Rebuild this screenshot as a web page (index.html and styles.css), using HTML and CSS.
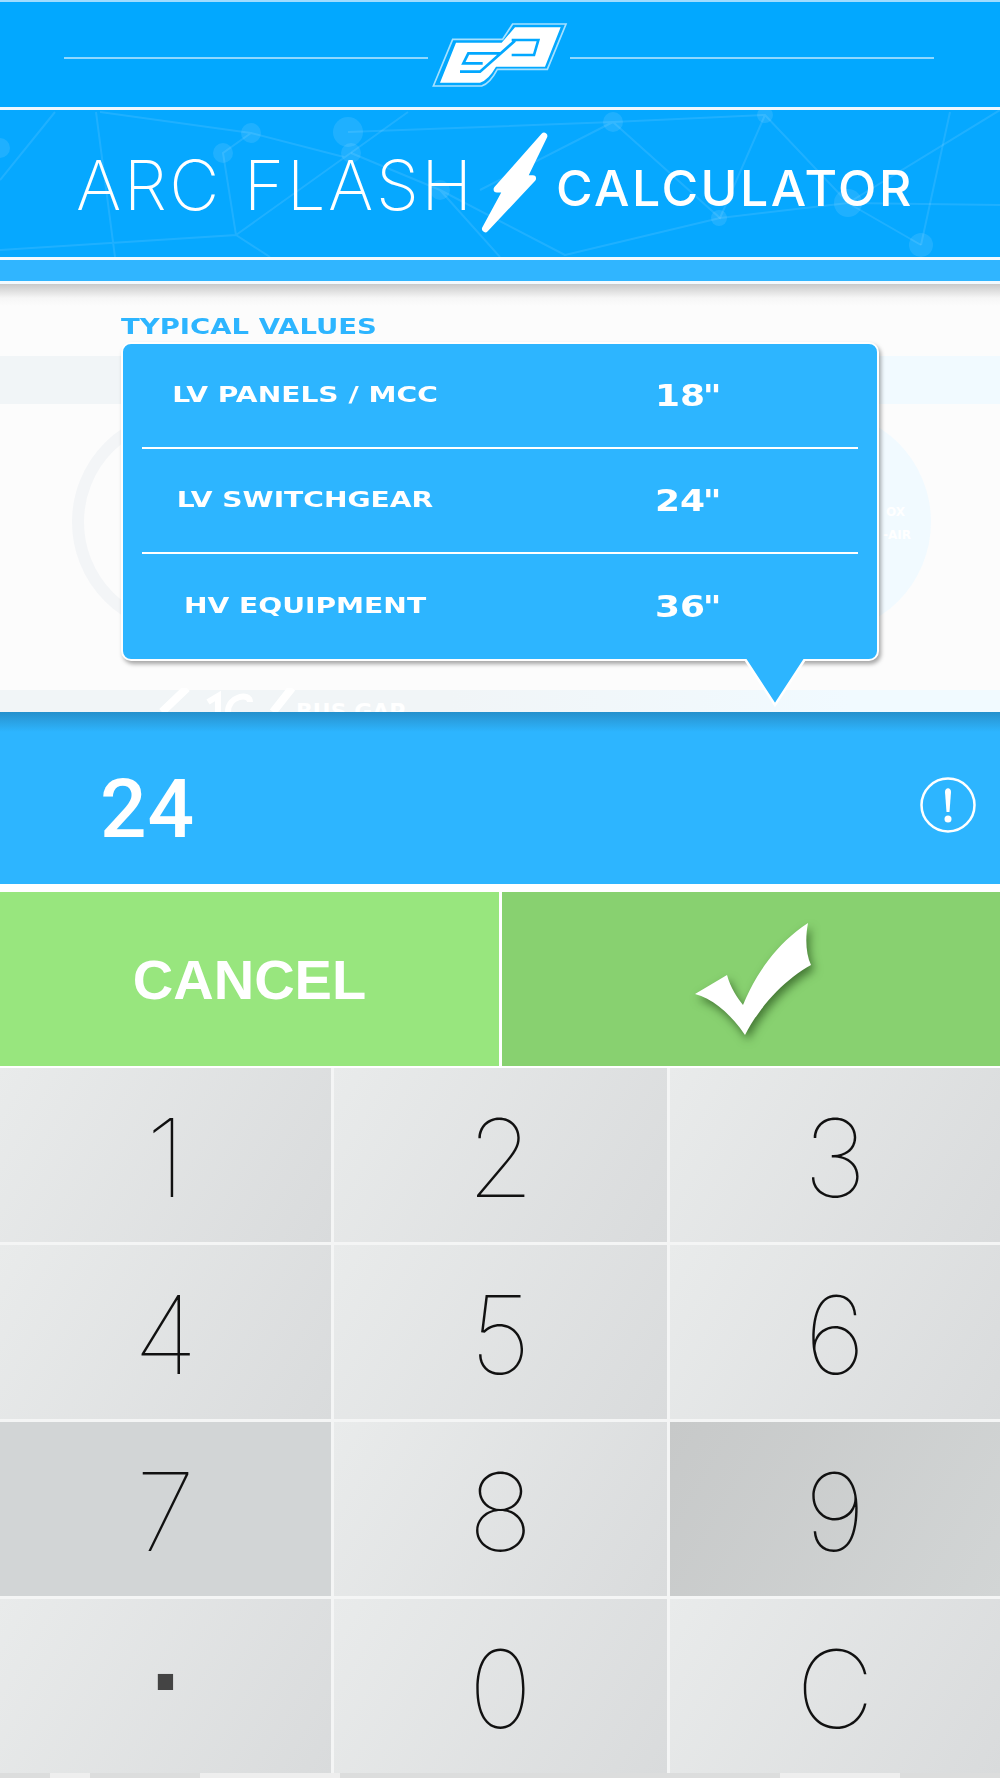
FILE: index.html
```html
<!DOCTYPE html>
<html lang="en">
  <head>
    <meta charset="UTF-8" />
    <meta name="viewport" content="width=device-width, initial-scale=1.0" />
    <title>Arc Flash Calculator</title>
    <link rel="stylesheet" href="styles.css">
  </head>
  <body>
    <!-- Logo bar -->
    <header class="logo-bar">
      <div class="logo-line"></div>
      <svg class="logo" viewBox="90 60 420 210" width="140" height="70">
        <path d="M100 258L158 118H308Q320 100 338 72H498L442 208H292Q270 250 245 258Z" fill="none" stroke="#a6e0ff" stroke-width="5" />
        <path d="M120 248L168 128H305L345 82H482L435 200H288Q265 240 240 248Z" fill="#fff" />
        <path d="M300 160H205L190 190H248M180 215H240L345 122M335 120H415L402 165H335" fill="none" stroke="#02a8ff" stroke-width="8" />
      </svg>
      <div class="logo-line"></div>
    </header>

    <!-- Title band -->
    <div class="title-band">
      <svg class="network" viewBox="0 110 1000 147" width="1000" height="147">
        <g stroke="#fff" stroke-opacity="0.1" stroke-width="2" fill="none">
          <path d="M96 112L115 257M55 112L0 180M100 112L251 133L344 157M251 133L223 153L236 235L0 250M236 235L270 257M236 235L408 112" />
          <path d="M348 132L613 122L765 115L848 203L1000 110M613 122L720 218L765 115M613 122L480 190M848 203L921 245M848 203L1000 205" />
          <path d="M720 218L565 255M720 218L848 203M440 190L565 255M440 190L351 153M440 190L500 257M921 245L950 112" />
        </g>
        <g fill="#fff" fill-opacity="0.1">
          <circle cx="0" cy="148" r="10" />
          <circle cx="251" cy="133" r="10" />
          <circle cx="348" cy="132" r="15" />
          <circle cx="223" cy="153" r="10" />
          <circle cx="351" cy="153" r="10" />
          <circle cx="440" cy="190" r="10" />
          <circle cx="613" cy="122" r="10" />
          <circle cx="765" cy="115" r="8" />
          <circle cx="719" cy="218" r="8" />
          <circle cx="848" cy="203" r="14" />
          <circle cx="921" cy="245" r="12" />
        </g>
      </svg>
      <h1 class="title">
        <span class="title-thin">ARC FLASH</span>
        <svg class="bolt" viewBox="110 120 220 320" width="73" height="107">
          <path d="M312 140L250 268H278L135 420L200 300H170Z" fill="#fff" stroke="#fff" stroke-width="20" stroke-linejoin="round" />
        </svg>
        <span class="title-bold">CALCULATOR</span>
      </h1>
    </div>
    <div class="stripe"></div>

    <!-- Typical values popover over the dimmed form -->
    <section class="panel">
      <div class="ghost">
        <div class="ghost-band ghost-band-top"></div>
        <div class="ghost-band ghost-band-bottom"></div>
        <div class="ghost-ring"></div>
        <div class="ghost-disc"></div>
        <div class="ghost-note"><span>OX</span><span>-AIR</span></div>
        <div class="ghost-gap">BUS GAP</div>
        <svg class="ghost-slash" viewBox="0 0 140 24" width="140" height="24">
          <path d="M31 0L6 24M136 0L117 24" stroke="#fff" stroke-width="8" />
          <path d="M52 14L62 8V24M72 24C72 8 94 4 94 14" stroke="#fff" stroke-width="6" fill="none" />
        </svg>
      </div>
      <h2 class="popover-title"><span>TYPICAL VALUES</span></h2>
      <div class="popover">
        <div class="value-row">
          <span class="value-name">LV PANELS / MCC</span>
          <span class="value-num">18<i>"</i></span>
        </div>
        <div class="value-row">
          <span class="value-name">LV SWITCHGEAR</span>
          <span class="value-num">24<i>"</i></span>
        </div>
        <div class="value-row">
          <span class="value-name">HV EQUIPMENT</span>
          <span class="value-num">36<i>"</i></span>
        </div>
        <svg class="popover-tail" viewBox="0 0 68 50" width="68" height="50">
          <path d="M3 0L33 46L63 0" fill="#2db5ff" stroke="#fff" stroke-width="2.5" />
        </svg>
      </div>
    </section>

    <!-- Entered value -->
    <div class="entry">
      <span class="entry-value">24</span>
      <svg class="entry-info" viewBox="0 0 56 56" width="56" height="56">
        <circle cx="28" cy="28" r="26.5" fill="none" stroke="#fff" stroke-width="2.5" />
        <path d="M25 15C25 10 31 10 31 15L29.5 35H26.5Z" fill="#fff" />
        <circle cx="28" cy="42" r="3.5" fill="#fff" />
      </svg>
    </div>

    <!-- Actions -->
    <div class="actions">
      <button class="action action-cancel">CANCEL</button>
      <button class="action action-ok" aria-label="OK">
        <svg class="check" viewBox="680 910 140 140" width="140" height="140">
          <path d="M694 995L726 976C730 990 736 998 742 1006C755 975 775 945 807 924C804 940 805 955 810 966C785 980 760 1005 744 1036C730 1015 712 1000 694 995Z" fill="#fff" />
        </svg>
      </button>
    </div>

    <!-- Keypad -->
    <div class="keypad">
      <button class="key">1</button>
      <button class="key">2</button>
      <button class="key">3</button>
      <button class="key">4</button>
      <button class="key">5</button>
      <button class="key">6</button>
      <button class="key key-mid">7</button>
      <button class="key">8</button>
      <button class="key key-dark">9</button>
      <button class="key key-dot">.</button>
      <button class="key">0</button>
      <button class="key">C</button>
    </div>
    <div class="page-end"></div>
  </body>
</html>
```

FILE: styles.css
```css
* {
  box-sizing: border-box;
}
body {
  margin: 0;
  width: 1000px;
  height: 1778px;
  overflow: hidden;
  background: #fff;
  font-family: "Liberation Sans", Arial, sans-serif;
}
button {
  border: none;
  padding: 0;
  margin: 0;
  font: inherit;
}

/* Logo bar */
.logo-bar {
  display: flex;
  align-items: center;
  height: 110px;
  padding: 0 66px 0 64px;
  background: #02a8ff;
  border-top: 2px solid #9fdcff;
  border-bottom: 3px solid #eef8ff;
}
.logo-line {
  flex: 1;
  height: 2px;
  margin-top: 7px;
  background: #8fd8ff;
}
.logo {
  margin: 1px 0 0 2px;
}

/* Title band */
.title-band {
  position: relative;
  height: 150px;
  background: #06a8ff;
  border-bottom: 3px solid #f2faff;
  overflow: hidden;
}
.network {
  position: absolute;
  top: 0;
  left: 0;
}
.title {
  position: relative;
  display: flex;
  align-items: center;
  height: 147px;
  margin: 0;
  padding-left: 76px;
  color: #fff;
  font-family: Inter, sans-serif;
  font-weight: 400;
}
.title-thin {
  width: 393px;
  font-size: 69px;
  font-weight: 150;
  line-height: 1;
  margin-top: 3px;
  letter-spacing: 2.5px;
  white-space: nowrap;
}
.bolt {
  margin: 0 0 2px 8px;
}
.title-bold {
  margin: 9px 0 0 6px;
  font-size: 50px;
  font-weight: 500;
  line-height: 1;
  letter-spacing: 2.5px;
  white-space: nowrap;
}

.stripe {
  height: 24px;
  background: #30b5ff;
  border-bottom: 3px solid #f2faff;
}

/* Panel and popover */
.panel {
  position: relative;
  height: 428px;
  padding: 33px 0 0 121px;
  background: linear-gradient(#c9c9c9, #f6f6f6 14px, #fcfcfc 22px);
  overflow: hidden;
}
.ghost-band {
  position: absolute;
  left: 0;
  right: 0;
  background: linear-gradient(90deg, #f1f5f7 45%, #f1faff 85%);
}
.ghost-band-top {
  top: 72px;
  height: 48px;
}
.ghost-band-bottom {
  top: 406px;
  height: 22px;
}
.ghost-ring {
  position: absolute;
  left: 72px;
  top: 126px;
  width: 224px;
  height: 224px;
  border: 12px solid #f3f5f7;
  border-radius: 50%;
}
.ghost-disc {
  position: absolute;
  left: 707px;
  top: 126px;
  width: 224px;
  height: 224px;
  background: #f1faff;
  border-radius: 50%;
}
.ghost-note {
  position: absolute;
  left: 883px;
  top: 217px;
  display: flex;
  flex-direction: column;
  align-items: flex-start;
  color: #fff;
  font: 700 12px/23px "DejaVu Sans", sans-serif;
}
.ghost-note span:first-child {
  margin-left: 3px;
}
.ghost-gap {
  position: absolute;
  left: 296px;
  top: 417px;
  color: #fff;
  font: 700 22px/1 "DejaVu Sans", sans-serif;
  white-space: nowrap;
}
.ghost-slash {
  position: absolute;
  left: 156px;
  top: 404px;
}
.popover-title {
  position: relative;
  height: 25px;
  margin: 0;
  color: #2db5ff;
  font: 700 21px/20px "DejaVu Sans", sans-serif;
  white-space: nowrap;
}
.popover-title span {
  display: inline-block;
  transform: scaleX(1.31);
  transform-origin: left;
}
.popover {
  position: relative;
  width: 758px;
  height: 319px;
  padding: 0 19px;
  background: #2db5ff;
  border: 2px solid #fff;
  border-radius: 10px;
  box-shadow: 2px 3px 4px rgba(0, 0, 0, 0.35);
}
.value-row {
  display: grid;
  grid-template-columns: 326px 1fr;
  align-items: center;
  height: 105px;
  padding-bottom: 1px;
  border-bottom: 2px solid #fff;
  color: #fff;
  font-family: "DejaVu Sans", sans-serif;
  font-weight: 700;
}
.value-row:last-of-type {
  border-bottom: none;
}
.value-name {
  font-size: 21px;
  text-align: center;
  white-space: nowrap;
  transform: scaleX(1.34);
}
.value-num {
  padding-left: 42px;
  font-size: 30px;
  text-align: center;
  transform: scaleX(1.2);
}
.value-num i {
  margin-left: -2px;
}
.popover-tail {
  position: absolute;
  left: 619px;
  top: 315px;
}

/* Entry */
.entry {
  display: flex;
  align-items: center;
  justify-content: space-between;
  height: 172px;
  padding: 21px 24px 0 100px;
  background: linear-gradient(#2490cc, #2a9fe0 8px, #2db5ff 20px);
  color: #fff;
}
.entry-value {
  font-family: Roboto, sans-serif;
  font-size: 82px;
  font-weight: 500;
  line-height: 1;
  letter-spacing: 1px;
}
.entry-info {
  margin-top: -8px;
}

/* Actions */
.actions {
  display: grid;
  grid-template-columns: 499px 1fr;
  column-gap: 3px;
  height: 174px;
  margin-top: 8px;
}
.action {
  display: flex;
  align-items: center;
  justify-content: center;
}
.action-cancel {
  background: #98e67e;
  color: #fff;
  font-size: 56px;
  font-weight: 700;
}
.action-ok {
  background: #88d170;
}
.check {
  filter: drop-shadow(3px 5px 5px rgba(30, 70, 20, 0.65));
}

/* Keypad */
.keypad {
  display: grid;
  grid-template-columns: 331px 333px 1fr;
  grid-auto-rows: 174px;
  gap: 3px;
  margin-top: 2px;
  background: #f4f5f5;
}
.key {
  display: flex;
  align-items: center;
  justify-content: center;
  padding-top: 6px;
  background: linear-gradient(120deg, #e9ebeb, #d9dbdc);
  color: #111;
  font-family: Inter, sans-serif;
  font-size: 108px;
  font-weight: 130;
  line-height: 1;
}
.key-mid {
  background: #d2d5d6;
}
.key-dark {
  background: linear-gradient(120deg, #c7c9c9, #d2d5d5);
}
.key-dot {
  padding: 0 0 66px;
  color: #444;
  font-family: "Liberation Sans", sans-serif;
  font-weight: 700;
}
.page-end {
  height: 5px;
  background: linear-gradient(90deg, #dcdddd 5%, #eeeeee 5% 9%, #dcdddd 9% 20%, #eeeeee 20% 34%, #dcdddd 34% 78%, #eeeeee 78% 90%, #dcdddd 90%);
}
```
